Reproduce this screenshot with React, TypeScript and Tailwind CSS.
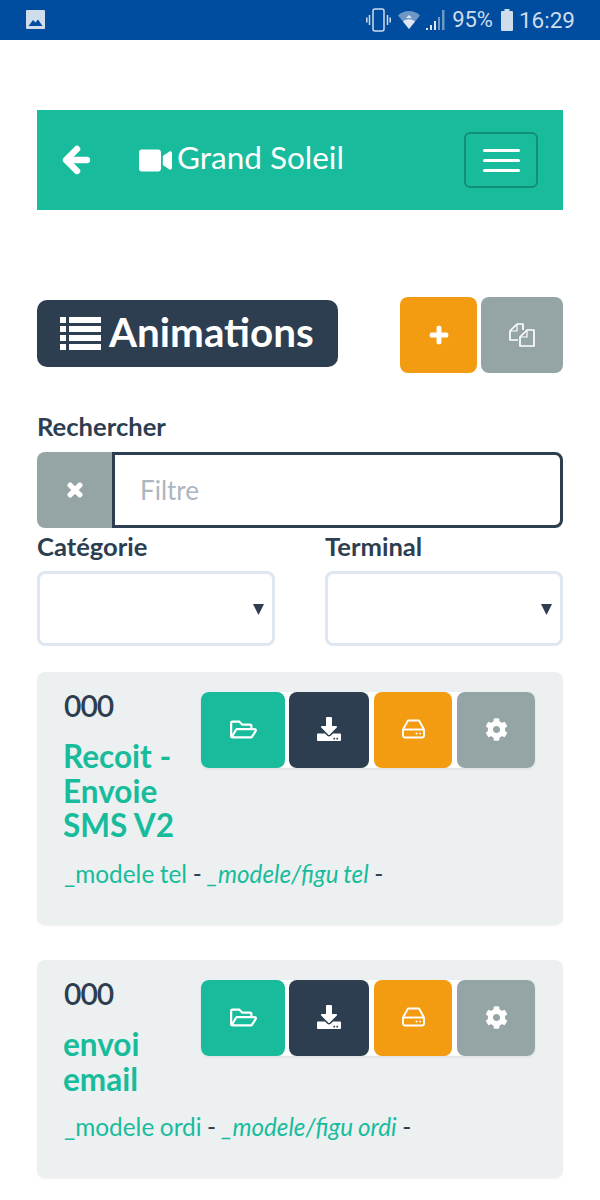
import { FaVideo, FaPlus, FaTimes, FaRegFolderOpen, FaDownload, FaCog } from 'react-icons/fa'

function FilesIcon() {
  return (
    <svg width="26" height="24" viewBox="0 0 26 24" fill="none" stroke="white" strokeWidth="1.7" strokeLinejoin="round">
      <path d="M8 1h6v6M8 1L1 8v9h8" />
      <path d="M8 1v7H1" strokeWidth="1.2" />
      <path d="M18 7h7v16H11v-9l7-7z" />
      <path d="M18 7v7h-7" strokeWidth="1.2" />
    </svg>
  )
}

function ListIcon() {
  return (
    <svg width="41" height="33" viewBox="0 0 41 33" fill="white">
      <rect x="0" y="0" width="6" height="6" />
      <rect x="9" y="0" width="32" height="6" />
      <rect x="0" y="9" width="6" height="6" />
      <rect x="9" y="9" width="32" height="6" />
      <rect x="0" y="18" width="6" height="6" />
      <rect x="9" y="18" width="32" height="6" />
      <rect x="0" y="27" width="6" height="6" />
      <rect x="9" y="27" width="32" height="6" />
    </svg>
  )
}

function BackIcon() {
  return (
    <svg width="28" height="30" viewBox="0 0 28 30" fill="none" stroke="white" strokeWidth="6.500" strokeLinecap="round" strokeLinejoin="round">
      <path d="M15 4L4 15l11 11" />
      <path d="M5 15h20" />
    </svg>
  )
}

function HddIcon() {
  return (
    <svg width="23" height="20" viewBox="0 0 23 20" fill="none" stroke="white" strokeWidth="1.9" strokeLinejoin="round">
      <path d="M6 1.500h11l5 9v6a2 2 0 0 1-2 2H3a2 2 0 0 1-2-2v-6z" />
      <path d="M1.500 10.500h20" />
      <circle cx="14.500" cy="14.500" r="1" fill="white" stroke="none" />
      <circle cx="18" cy="14.500" r="1" fill="white" stroke="none" />
    </svg>
  )
}

function SelectArrow() {
  return (
    <svg width="11" height="11" viewBox="0 0 11 11" className="mt-[2px]">
      <path d="M0 0h11L5.500 11z" fill="#2c3e50" />
    </svg>
  )
}

function StatusBar() {
  return (
    <div className="h-10 bg-[#004c9e] flex items-center pl-[26px] pr-[25px] text-[#cfdcec]">
      <svg width="20" height="20" viewBox="0 0 20 20">
        <rect x="0" y="0" width="19" height="19" rx="1" fill="#cfdcec" />
        <path d="M2.500 16l4.500-6 2.500 2.500 2.500-3 4.500 6.500z" fill="#004c9e" />
      </svg>
      <div className="ml-auto flex items-center">
        <svg width="25" height="24" viewBox="0 0 25 24" fill="none" stroke="#cfdcec">
          <rect x="7" y="1" width="11" height="22" rx="2" strokeWidth="1.5" />
          <path d="M3.500 7v10M21.500 7v10M0.800 9.500v5M24.200 9.500v5" strokeWidth="1.5" />
        </svg>
        <svg width="22" height="20" viewBox="0 0 22 20" className="ml-[7px]">
          <path d="M0 5.500C5.500-.5 16.500-.5 22 5.500L11 19z" fill="#6f97c6" />
          <path d="M5 11.500c3.300-3 8.700-3 12 0L11 19z" fill="#dfe8f2" />
          <path d="M11 5l3 3H8z" fill="#dfe8f2" />
        </svg>
        <svg width="20" height="22" viewBox="0 0 20 22" className="ml-[6px]">
          <path d="M0 19h2v2H0zM4 16h2v5H4zM8 12h2v9H8z" fill="#dfe8f2" />
          <path d="M12 8h2v13h-2zM16 1h2.500v20H16z" fill="#6f97c6" />
        </svg>
        <span className="ml-[6px] text-[22px] leading-none">95%</span>
        <svg width="12" height="22" viewBox="0 0 12 22" className="ml-[8px]">
          <path d="M3.500 0h5v2H11a1 1 0 0 1 1 1v18a1 1 0 0 1-1 1H1a1 1 0 0 1-1-1V3a1 1 0 0 1 1-1h2.500z" fill="#cfdcec" />
        </svg>
        <span className="ml-[6px] text-[22.500px] leading-none">16:29</span>
      </div>
    </div>
  )
}

function ActionGroup() {
  return (
    <div className="flex h-[76px] bg-white rounded-lg shadow-[0_1px_3px_rgba(0,0,0,0.08)] text-white">
      <button className="w-[84px] bg-[#18bc9c] rounded-lg flex items-center justify-center pb-[2px]"><FaRegFolderOpen size={27} /></button>
      <button className="w-[80px] ml-[4px] bg-[#2c3e50] rounded-lg flex items-center justify-center pb-[2px]"><FaDownload size={24} /></button>
      <button className="w-[78px] ml-[5px] bg-[#f39c12] rounded-lg flex items-center justify-center pb-[2px]"><HddIcon /></button>
      <button className="w-[78px] ml-[5px] bg-[#95a5a6] rounded-lg flex items-center justify-center pb-[2px]"><FaCog size={23} /></button>
    </div>
  )
}

function Card({ title, modele, figu, height, className }: { title: string; modele: string; figu: string; height: string; className?: string }) {
  return (
    <div className={`bg-[#ecf0f1] rounded-lg shadow-[0_1px_2px_rgba(0,0,0,0.06)] pl-[27px] pr-[28px] pt-5 ${height} ${className ?? ''}`}>
      <div className="flex justify-between items-start">
        <div className="w-[130px]">
          <div className="text-[#2c3e50] text-[30px] font-semibold tracking-[-1px] leading-[28px] -mt-[1px]">000</div>
          <div className="text-[#18bc9c] text-[31.500px] font-bold leading-[34.500px] mt-[20px] -ml-[1px]">{title}</div>
        </div>
        <ActionGroup />
      </div>
      <p className="text-[24.400px] leading-[34px] text-[#2c3e50] mt-[14px] [word-spacing:-0.7px]">
        <span className="text-[#18bc9c]">{modele}</span> - <em className="text-[#18bc9c] text-[24.200px]">{figu}</em> -
      </p>
    </div>
  )
}

export default function App() {
  return (
    <div className="w-[600px] h-[1200px] overflow-hidden bg-white font-['Lato',sans-serif] text-[#2c3e50]">
      <div className="font-['Roboto',sans-serif]"><StatusBar /></div>

      <div className="px-[37px]">
        <nav className="mt-[70px] h-[100px] bg-[#18bc9c] flex items-center text-white">
          <div className="ml-[25px]"><BackIcon /></div>
          <FaVideo size={33} className="ml-[49px]" />
          <span className="ml-[5px] text-[31.500px] leading-none pb-[4px]">Grand Soleil</span>
          <button className="ml-auto mr-[25px] w-[74px] h-[56px] border-2 border-[#128f76] rounded-md flex flex-col items-center justify-center gap-[7px]">
            <span className="block w-[37px] h-[3px] bg-white rounded-sm" />
            <span className="block w-[37px] h-[3px] bg-white rounded-sm" />
            <span className="block w-[37px] h-[3px] bg-white rounded-sm" />
          </button>
        </nav>

        <div className="mt-[87px] flex items-start">
          <h1 className="mt-[3px] w-[301px] h-[67px] bg-[#2c3e50] rounded-[10px] text-white flex items-center pl-[23px]">
            <ListIcon />
            <span className="ml-[8px] text-[40.400px] font-bold leading-none pb-[3px]">Animations</span>
          </h1>
          <button className="ml-auto w-[77px] h-[76px] bg-[#f39c12] rounded-lg text-white flex items-center justify-center"><FaPlus size={20} stroke="currentColor" strokeWidth={30} /></button>
          <button className="ml-[4px] w-[82px] h-[76px] bg-[#95a5a6] rounded-lg flex items-center justify-center"><FilesIcon /></button>
        </div>

        <label className="block mt-[38px] text-[25.600px] font-bold leading-[30px]">Rechercher</label>
        <div className="mt-[11px] flex h-[76px]">
          <div className="w-[75px] bg-[#95a5a6] rounded-l-lg text-white flex items-center justify-center"><FaTimes size={20} stroke="currentColor" strokeWidth={40} /></div>
          <div className="flex-1 border-[3px] border-[#2c3e50] rounded-r-lg flex items-center pl-[25px] text-[26px] text-[#acb6c0]">Filtre</div>
        </div>

        <div className="grid grid-cols-[238px_238px] gap-x-[50px]">
          <div>
            <label className="block mt-[3px] text-[25.600px] font-bold leading-[30px]">Catégorie</label>
            <div className="mt-[10px] h-[75px] border-[3px] border-[#dee6f0] rounded-lg flex items-center justify-end pr-[8px]"><SelectArrow /></div>
          </div>
          <div>
            <label className="block mt-[3px] text-[25.600px] font-bold leading-[30px]">Terminal</label>
            <div className="mt-[10px] h-[75px] border-[3px] border-[#dee6f0] rounded-lg flex items-center justify-end pr-[8px]"><SelectArrow /></div>
          </div>
        </div>

        <Card className="mt-[26px]" height="h-[253px]" title="Recoit - Envoie SMS V2" modele="_modele tel" figu="_modele/figu tel" />
        <Card className="mt-[35px]" height="h-[218px]" title="envoi email" modele="_modele ordi" figu="_modele/figu ordi" />
      </div>
    </div>
  )
}
